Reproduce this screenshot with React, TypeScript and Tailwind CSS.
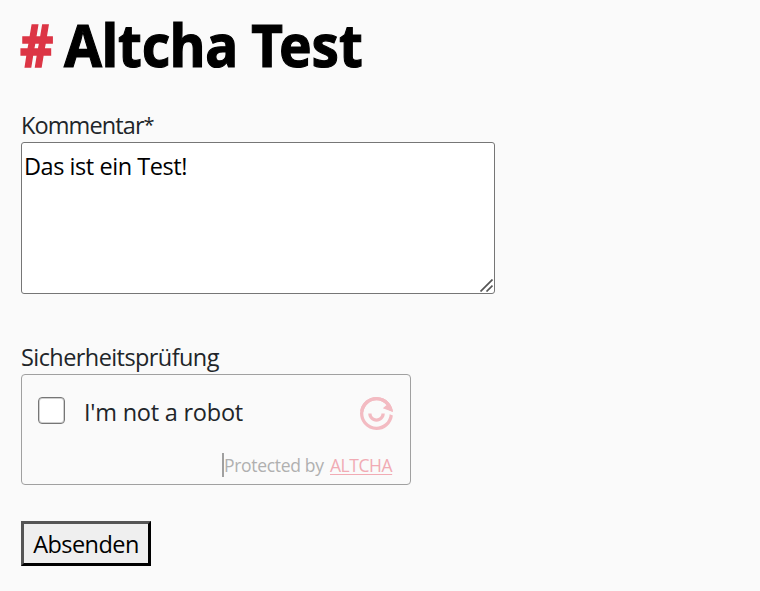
function AltchaLogo() {
  return (
    <svg className="mt-[7px] size-[33px] text-[#f3bbc2]" viewBox="0 0 20 20" fill="currentColor" aria-hidden="true">
      <path d="M2.33955 16.4279C5.88954 20.6586 12.1971 21.2105 16.4279 17.6604C18.4699 15.947 19.6548 13.5911 19.9352 11.1365L17.9886 10.4279C17.8738 12.5624 16.909 14.6459 15.1423 16.1284C11.7577 18.9684 6.71167 18.5269 3.87164 15.1423C1.03163 11.7577 1.4731 6.71166 4.8577 3.87164C8.24231 1.03162 13.2883 1.4731 16.1284 4.8577C16.9767 5.86872 17.5322 7.02798 17.804 8.2324L19.9522 9.01429C19.7622 7.07737 19.0059 5.17558 17.6604 3.57212C14.1104 -0.658624 7.80283 -1.21043 3.57212 2.33956C-0.658625 5.88958 -1.21046 12.1971 2.33955 16.4279Z" />
      <path d="M3.57212 2.33956C1.65755 3.94607 0.496389 6.11731 0.12782 8.40523L2.04639 9.13961C2.26047 7.15832 3.21057 5.25375 4.8577 3.87164C8.24231 1.03162 13.2883 1.4731 16.1284 4.8577L13.8302 6.78606L19.9633 9.13364C19.7929 7.15555 19.0335 5.20847 17.6604 3.57212C14.1104 -0.658624 7.80283 -1.21043 3.57212 2.33956Z" />
      <path d="M7 10H5C5 12.7614 7.23858 15 10 15C12.7614 15 15 12.7614 15 10H13C13 11.6569 11.6569 13 10 13C8.3431 13 7 11.6569 7 10Z" />
    </svg>
  );
}

export default function App() {
  return (
    <main className="flex h-[591px] w-[760px] flex-col items-start overflow-hidden bg-[#fafafa] pl-[21px] font-['Open_Sans',sans-serif] text-[23.5px] leading-8 text-[#212529]">
      <h1 className="mt-[4px] flex h-20 items-center whitespace-nowrap font-['Noto_Sans',sans-serif] text-[60px] font-bold leading-[80px] text-black [font-stretch:80%]">
        <span className="w-[43px] origin-left scale-x-[0.86] -translate-x-px text-[#dc3545] [-webkit-text-stroke:1.6px_#dc3545]">#</span>
        <span className="origin-left scale-x-[0.914] tracking-[-0.15px] [word-spacing:-1px] [-webkit-text-stroke:1.2px_black]">Altcha Test</span>
      </h1>

      <label htmlFor="comment" className="mt-[25px] h-[33px] tracking-[-0.9px]">Kommentar<sup className="top-[-2px] text-[20px] leading-none">*</sup></label>
      <div className="relative h-[152px] w-[474px]">
        <textarea
          id="comment"
          defaultValue="Das ist ein Test!"
          className="block size-full resize-none rounded-[3px] border border-[#767676] bg-white pl-[2px] pr-[3px] py-[7px] tracking-[-0.45px] text-black outline-none"
        />
        <svg className="absolute bottom-[2px] right-[2px] size-[13px]" viewBox="0 0 13 13" fill="none" stroke="#555" strokeWidth="1.7" aria-hidden="true">
          <path d="M.5 12.5 12.5 .5M6.5 12.5 12.5 6.5" />
        </svg>
      </div>

      <div className="mt-[47px] h-[33px] tracking-[-0.58px]">Sicherheitsprüfung</div>
      <section className="flex h-[111px] w-[390px] flex-col rounded-[4px] border border-[#a0a0a0] pl-4 pr-[17px] pt-[15px]">
        <div className="flex items-start">
          <input id="robot" type="checkbox" className="mt-[7px] size-[27px] appearance-none rounded-[4px] border border-[#767676] bg-white shadow-[inset_0_0_0_1px_#d0d0d0]" />
          <label htmlFor="robot" className="ml-[19px] mt-[6px] grow tracking-[-0.23px]">I'm not a robot</label>
          <AltchaLogo />
        </div>
        <div className="mt-[23px] flex h-6 items-center self-end whitespace-nowrap border-l-2 border-[#a0a0a0] text-[17.5px] leading-6 text-[#b0b0b0]">
          <span className="w-[101px] tracking-[-0.32px]">Protected by</span>
          <a href="#" className="ml-[5px] w-[63px] tracking-[-0.45px] text-[#f1abb4] underline underline-offset-2">ALTCHA</a>
        </div>
      </section>

      <button className="mt-[36px] h-[45px] w-[130px] border-[3px] border-b-black border-l-[#555] border-r-black border-t-[#555] bg-[#efefef] tracking-[-0.55px] text-black">
        Absenden
      </button>
    </main>
  );
}
